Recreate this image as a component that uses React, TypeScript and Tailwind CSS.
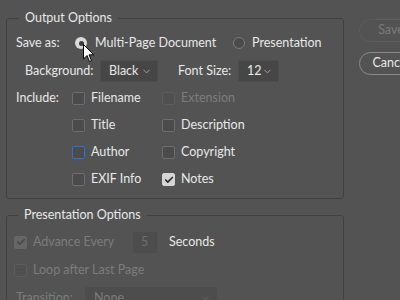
import { ChevronDown, Check } from 'lucide-react';

function Box({ checked, disabled, focus }: { checked?: boolean; disabled?: boolean; focus?: boolean }) {
  let cls = 'bg-[#4b4b4b] border-[#6e6e6e]';
  if (checked && !disabled) cls = 'bg-[#d6d6d6] border-[#d6d6d6]';
  else if (checked && disabled) cls = 'bg-[#666666] border-[#666666]';
  else if (disabled) cls = 'bg-[#505050] border-[#5c5c5c]';
  else if (focus) cls = 'bg-[#4b4b4b] border-[#2f6fd6]';
  return (
    <span className={`w-[13px] h-[13px] rounded-[2px] border flex items-center justify-center shrink-0 ${cls}`}>
      {checked && <Check className={`w-[10px] h-[10px] ${disabled ? 'text-[#4a4a4a]' : 'text-[#2b2b2b]'}`} strokeWidth={4} />}
    </span>
  );
}

function Item({ label, checked, disabled, focus }: { label: string; checked?: boolean; disabled?: boolean; focus?: boolean }) {
  return (
    <div className="flex items-center gap-[6px]">
      <Box checked={checked} disabled={disabled} focus={focus} />
      <span className={disabled ? 'text-[#7c7c7c]' : ''}>{label}</span>
    </div>
  );
}

function Select({ value, width }: { value: string; width: string }) {
  return (
    <div className={`${width} h-[22px] rounded-[2px] bg-[#464646] border border-[#4c4c4c] flex items-center justify-between pl-[8px] pr-[5px]`}>
      <span>{value}</span>
      <ChevronDown className="w-[11px] h-[11px] text-[#a8a8a8]" strokeWidth={2} />
    </div>
  );
}

export default function App() {
  return (
    <div
      className="relative w-[400px] h-[300px] overflow-hidden bg-[#535353] text-[#e8e8e8] text-[12.5px] flex"
      style={{ fontFamily: 'Lato, "Open Sans", sans-serif' }}
    >
      <div className="ml-[6px] w-[338px] shrink-0 flex flex-col pt-[10px]">
        <fieldset className="border border-[#414141] rounded-[3px] pl-[9px] pb-[5px]">
          <legend className="ml-[3px] px-[6px] leading-[16px]">Output Options</legend>
          <div className="mt-[6px] h-[22px] flex items-center">
            <span className="w-[59px]">Save as:</span>
            <span className="w-[12px] h-[12px] rounded-full bg-[#dadada] flex items-center justify-center">
              <span className="w-[5px] h-[5px] rounded-full bg-[#3a3a3a]" />
            </span>
            <span className="ml-[8px] w-[138px]">Multi-Page Document</span>
            <span className="w-[12px] h-[12px] rounded-full bg-[#4b4b4b] border border-[#7a7a7a]" />
            <span className="ml-[7px]">Presentation</span>
          </div>
          <div className="mt-[6px] h-[22px] flex items-center pl-[9px]">
            <span className="w-[75px]">Background:</span>
            <Select value="Black" width="w-[58px]" />
            <span className="ml-[20px] w-[60px]">Font Size:</span>
            <Select value="12" width="w-[41px]" />
          </div>
          <div className="mt-[3px] flex">
            <div className="w-[56px] h-[27px] flex items-center">Include:</div>
            <div className="grid grid-cols-[90px_1fr] auto-rows-[27px] items-center">
              <Item label="Filename" />
              <Item label="Extension" disabled />
              <Item label="Title" />
              <Item label="Description" />
              <Item label="Author" focus />
              <Item label="Copyright" />
              <Item label="EXIF Info" />
              <Item label="Notes" checked />
            </div>
          </div>
        </fieldset>
        <fieldset className="mt-[8px] border border-[#414141] rounded-[3px] pl-[7px] h-[120px]">
          <legend className="ml-[4px] px-[6px] leading-[16px]">Presentation Options</legend>
          <div className="mt-[8px] h-[22px] flex items-center">
            <Box checked disabled />
            <span className="ml-[6px] w-[100px] text-[#7c7c7c]">Advance Every</span>
            <div className="w-[24px] h-[21px] border border-[#4c4c4c] bg-[#4d4d4d] flex items-center pl-[7px] text-[#6f6f6f]">5</div>
            <span className="ml-[12px]">Seconds</span>
          </div>
          <div className="mt-[6px] h-[22px] flex items-center">
            <Box disabled />
            <span className="ml-[6px] text-[#7c7c7c]">Loop after Last Page</span>
          </div>
          <div className="mt-[6px] h-[22px] flex items-center pl-[2px]">
            <span className="w-[69px] text-[#7c7c7c]">Transition:</span>
            <div className="w-[132px] h-[22px] rounded-[2px] bg-[#4d4d4d] border border-[#4c4c4c] flex items-center justify-between pl-[8px] pr-[5px] text-[#7c7c7c]">
              <span>None</span>
              <ChevronDown className="w-[11px] h-[11px] text-[#6a6a6a]" strokeWidth={2} />
            </div>
          </div>
        </fieldset>
      </div>
      <div className="ml-[15px] pt-[19px] flex flex-col gap-[10px] shrink-0">
        <button className="w-[64px] h-[23px] rounded-full border border-[#5d5d5d] text-[#7a7a7a]">Save</button>
        <button className="w-[64px] h-[23px] rounded-full border border-[#8a8a8a] text-[#e8e8e8]">Cancel</button>
      </div>
      <svg className="absolute left-[83px] top-[44px]" width="12" height="19" viewBox="0 0 12 19">
        <path d="M0.5 0.5 L0.5 15 L4 11.5 L6.5 17.5 L8.5 16.6 L6 10.8 L10.8 10.8 Z" fill="#fff" stroke="#000" strokeWidth="1" strokeLinejoin="round" />
      </svg>
    </div>
  );
}
